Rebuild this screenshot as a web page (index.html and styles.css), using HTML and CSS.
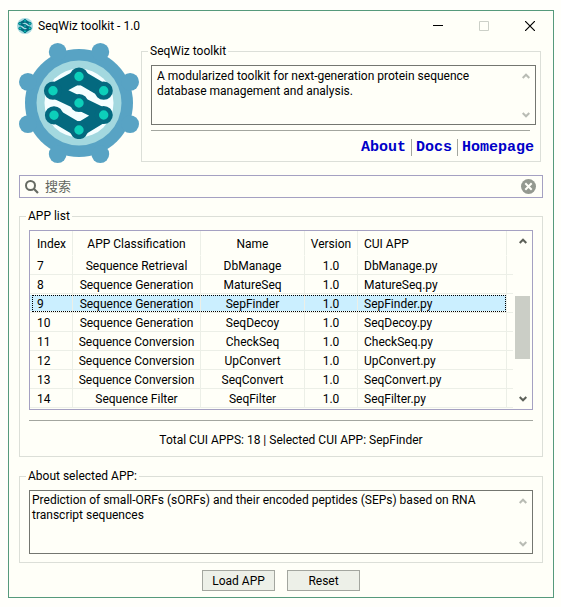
FILE: index.html
```html
<!DOCTYPE html>
<html lang="en">
<head>
<meta charset="utf-8">
<title>SeqWiz toolkit - 1.0</title>
<link rel="stylesheet" href="styles.css">
</head>
<body>
<svg class="defs" aria-hidden="true">
  <symbol id="helix" viewBox="43 67 72 72">
    <path d="M103.700 90.700L79 76.300 53 90.700 79 103 103.700 115 79 130 54 115.300" fill="none" stroke="#04697f" stroke-width="14" stroke-linejoin="round"/>
    <g fill="#0dcfba" stroke="#04697f" stroke-width="4.400">
      <circle cx="79" cy="76.500" r="6.900"/><circle cx="53" cy="90.700" r="6.900"/><circle cx="103.700" cy="90.700" r="6.900"/>
      <circle cx="79" cy="103" r="6.900"/><circle cx="54" cy="115.300" r="6.900"/><circle cx="103.700" cy="115" r="6.900"/><circle cx="79" cy="130" r="6.900"/>
    </g>
  </symbol>
  <symbol id="up" viewBox="0 0 8 6"><path d="M0.700 5L4 1.700 7.300 5" fill="none" stroke="currentColor" stroke-width="2"/></symbol>
  <symbol id="down" viewBox="0 0 8 6"><path d="M0.700 1L4 4.300 7.300 1" fill="none" stroke="currentColor" stroke-width="2"/></symbol>
</svg>
<div class="window">
  <header class="titlebar">
    <svg class="app-icon" viewBox="0 0 16 16" aria-hidden="true"><circle cx="8" cy="8" r="8" fill="#a5d9e0"/><use href="#helix" x="1" y="1" width="14" height="14"/></svg>
    <h1>SeqWiz toolkit - 1.0</h1>
    <button class="caption" aria-label="Minimize"><svg width="10" height="10"><path d="M0 4.500H10" stroke="#000"/></svg></button>
    <button class="caption" aria-label="Maximize" disabled><svg width="10" height="10"><path d="M.5 .5H9.500V9.500H.5Z" fill="none" stroke="#ccd0c8"/></svg></button>
    <button class="caption" aria-label="Close"><svg width="10" height="10"><path d="M0 0L10 10M10 0L0 10" stroke="#000" stroke-width="1.200"/></svg></button>
  </header>

  <section class="intro">
    <svg class="logo" viewBox="19 43 120 120" role="img" aria-label="SeqWiz logo">
      <g fill="#58a3c4">
        <circle cx="79" cy="103" r="54"/>
        <circle cx="57.700" cy="51.900" r="8.900"/><circle cx="100.300" cy="51.900" r="8.900"/>
        <circle cx="27.900" cy="81.900" r="8.900"/><circle cx="130.100" cy="81.900" r="8.900"/>
        <circle cx="27.900" cy="124.100" r="8.900"/><circle cx="130.100" cy="124.100" r="8.900"/>
        <circle cx="57.700" cy="154.100" r="8.900"/><circle cx="100.300" cy="154.100" r="8.900"/>
      </g>
      <circle cx="79" cy="103" r="42.500" fill="#a3d8df"/>
      <circle cx="79" cy="103" r="34.500" fill="#f5feff"/>
      <use href="#helix" x="43" y="67" width="72" height="72"/>
    </svg>
    <fieldset class="about">
      <legend>SeqWiz toolkit</legend>
      <div class="textbox">
        <textarea class="padded" rows="3" readonly aria-label="Toolkit description">A modularized toolkit for next-generation protein sequence database management and analysis.</textarea>
        <div class="scroll muted"><svg><use href="#up"/></svg><svg><use href="#down"/></svg></div>
      </div>
      <hr>
      <nav><a href="#about">About</a><a href="#docs">Docs</a><a href="#home">Homepage</a></nav>
    </fieldset>
  </section>

  <div class="search">
    <svg class="lens" viewBox="0 0 14 14" aria-hidden="true"><circle cx="5.500" cy="5.500" r="4.500" fill="none" stroke="#666b63" stroke-width="2"/><path d="M8.800 8.800L13 13" stroke="#666b63" stroke-width="2.200"/></svg>
    <input type="text" placeholder="搜索" aria-label="搜索">
    <button class="clear" aria-label="Clear"><svg viewBox="0 0 15 15"><circle cx="7.500" cy="7.500" r="7.500" fill="#949990"/><path d="M4.300 4.300L10.700 10.700M10.700 4.300L4.300 10.700" stroke="#fffff8" stroke-width="2"/></svg></button>
  </div>

  <fieldset class="list">
    <legend>APP list</legend>
    <div class="grid">
      <div class="rows">
        <table>
          <colgroup><col class="c-index"><col class="c-class"><col class="c-name"><col class="c-version"><col><col class="c-rest"></colgroup>
          <thead><tr><th>Index</th><th>APP Classification</th><th>Name</th><th>Version</th><th>CUI APP</th><td></td></tr></thead>
          <tbody>
            <tr><td>7</td><td>Sequence Retrieval</td><td>DbManage</td><td>1.0</td><td>DbManage.py</td><td></td></tr>
            <tr><td>8</td><td>Sequence Generation</td><td>MatureSeq</td><td>1.0</td><td>MatureSeq.py</td><td></td></tr>
            <tr class="selected"><td>9</td><td>Sequence Generation</td><td>SepFinder</td><td>1.0</td><td>SepFinder.py</td><td></td></tr>
            <tr><td>10</td><td>Sequence Generation</td><td>SeqDecoy</td><td>1.0</td><td>SeqDecoy.py</td><td></td></tr>
            <tr><td>11</td><td>Sequence Conversion</td><td>CheckSeq</td><td>1.0</td><td>CheckSeq.py</td><td></td></tr>
            <tr><td>12</td><td>Sequence Conversion</td><td>UpConvert</td><td>1.0</td><td>UpConvert.py</td><td></td></tr>
            <tr><td>13</td><td>Sequence Conversion</td><td>SeqConvert</td><td>1.0</td><td>SeqConvert.py</td><td></td></tr>
            <tr><td>14</td><td>Sequence Filter</td><td>SeqFilter</td><td>1.0</td><td>SeqFilter.py</td><td></td></tr>
          </tbody>
        </table>
      </div>
      <div class="scroll"><svg><use href="#up"/></svg><div class="track"><div class="thumb"></div></div><svg><use href="#down"/></svg></div>
    </div>
    <hr>
    <p class="status">Total CUI APPS: 18 | Selected CUI APP: SepFinder</p>
  </fieldset>

  <fieldset class="detail">
    <legend>About selected APP:</legend>
    <div class="textbox">
      <textarea rows="4" readonly aria-label="About selected APP">Prediction of small-ORFs (sORFs) and their encoded peptides (SEPs) based on RNA transcript sequences</textarea>
      <div class="scroll muted"><svg><use href="#up"/></svg><svg><use href="#down"/></svg></div>
    </div>
  </fieldset>

  <footer><button class="push">Load APP</button><button class="push">Reset</button></footer>
</div>
</body>
</html>
```

FILE: styles.css
```css
* { box-sizing: border-box; }
body {
  margin: 0;
  padding: 10px 7px 9px 8px;
  background: #fffffb;
  color: #000;
  font: 12px/16px Roboto, "Noto Sans CJK SC", sans-serif;
}
button, input, textarea { font: inherit; color: inherit; }
.defs { position: absolute; width: 0; height: 0; }

.window { border: 1px solid #569a7c; background: #fffff8; padding-bottom: 6px; }

.titlebar { display: flex; align-items: center; height: 29px; padding-left: 8px; }
.app-icon { width: 16px; height: 16px; margin-right: 5px; }
h1 { flex: 1; margin: 0; font-size: 12px; font-weight: 400; }
.caption {
  display: flex; align-items: center; justify-content: center;
  width: 46px; height: 29px; padding: 0; border: 0; background: none;
}

.intro { display: flex; align-items: flex-start; gap: 2px; padding: 3px 12px 0 10px; }
.logo { width: 120px; height: 120px; flex: none; }

fieldset { min-width: 0; margin: 0; padding: 6px 9px 8px; border: 1px solid #dcdfd8; }
legend { margin-left: -3px; padding: 0 2px; line-height: 16px; }
.about { flex: 1; padding-right: 4px; padding-bottom: 5px; }
.list { margin: 10px 10px 0; }
.detail { margin: 11px 10px 0; }

hr { height: 1px; margin: 10px 0 0; border: 0; background: #a3a69f; }
.about hr { margin: 5px 6px 0 0; }

nav { display: flex; justify-content: flex-end; margin-top: 8px; padding-right: 2px; }
nav a {
  padding: 0 5px 0 4px;
  color: #0000c8;
  font: bold 15px/17px "Liberation Mono", monospace;
  text-decoration: none;
}
nav a + a { border-left: 1px solid #a3a69f; }
nav a:last-child { padding-right: 0; }

.textbox { display: flex; border: 1px solid #747670; }
.textbox textarea {
  flex: 1; min-width: 0; display: block;
  padding: 2px 2px 0; border: 0; outline: 0; resize: none; overflow: hidden;
  background: none; line-height: 15px;
}
.textbox textarea.padded { padding: 3px 5px 10px; }

.scroll {
  display: flex; flex-direction: column; justify-content: space-between; align-items: center;
  width: 19px; padding: 7px 0 6px; color: #5c6058;
}
.scroll svg { width: 8px; height: 6px; flex: none; }
.scroll.muted { color: #b9bcb4; }
.track { flex: 1; align-self: stretch; margin: 2px; padding-top: 50px; }
.thumb { height: 63px; background: #cbcec6; }

.search {
  display: flex; align-items: center;
  height: 23px; margin: 12px 10px 0; padding: 0 6px 0 5px;
  border: 1px solid #a5a1c2;
}
.lens { width: 14px; height: 14px; }
.search input {
  flex: 1; min-width: 0; padding: 0 6px; border: 0; outline: 0;
  background: none; font-size: 13px;
}
.search input::placeholder { color: #62665f; opacity: 1; }
.clear { display: flex; padding: 0; border: 0; background: none; }
.clear svg { width: 15px; height: 15px; }

.grid { display: flex; padding-bottom: 1px; border: 1px solid #a5a1c2; }
.rows { flex: 1; min-width: 0; }
table { width: 100%; table-layout: fixed; border-collapse: separate; border-spacing: 0; }
.c-index { width: 43px; }
.c-class { width: 128px; }
.c-name { width: 104px; }
.c-version { width: 53px; }
.c-rest { width: 6px; }
th, td {
  height: 19px; padding: 1px 0 0; text-align: center; font-weight: 400; line-height: 16px;
  border-right: 1px solid #ecefe7; border-bottom: 1px solid #ecefe7;
}
thead th, thead td { height: 25px; padding-top: 2px; border-bottom-color: transparent; }
tr > :first-child { padding-left: 7px; text-align: left; }
tr > :nth-child(5) { padding-left: 6px; text-align: left; }
tr > :last-child { border-right: 0; }
.selected td:not(:last-child) {
  background: linear-gradient(#cbefff, #cbefff) 0 1px / 100% 16px no-repeat;
}
.selected { position: relative; }
.selected td:first-child::after {
  content: ""; position: absolute; left: 2px; right: 7px; top: 1px; bottom: 1px;
  border: 1px dotted #000;
}

.status { margin: 11px 0 0 20px; text-align: center; }

footer { display: flex; justify-content: center; gap: 12px; margin-top: 7px; }
.push {
  width: 73px; height: 21px; padding: 0;
  border: 1px solid #a3a69f; background: #edf0e8;
}
```
